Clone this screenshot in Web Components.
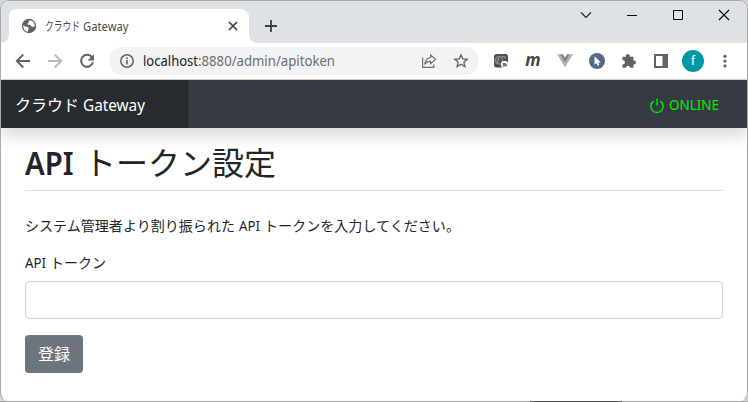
<!DOCTYPE html>
<html lang="ja">
<head>
<meta charset="utf-8">
<title>クラウド Gateway</title>
<style>
html,body{margin:0;height:100%;overflow:hidden;background:#d5d5d6}
body{font-family:"Noto Sans","Noto Sans CJK JP",sans-serif;color:#212529}
</style>
</head>
<body>
<browser-window>
  <browser-tabs slot="tabs">
    <fit-text width="35">クラウド</fit-text><fit-text width="45.5">Gateway</fit-text>
  </browser-tabs>
  <browser-toolbar slot="toolbar">
    <fit-text slot="url" width="55" style="color:#202124">localhost</fit-text><fit-text slot="url" width="137">:8880/admin/apitoken</fit-text>
  </browser-toolbar>
  <app-header>
    <fit-text slot="brand" width="64">クラウド</fit-text><fit-text slot="brand" width="62">Gateway</fit-text>
    <fit-text slot="status" width="50">ONLINE</fit-text>
  </app-header>
  <token-page></token-page>
</browser-window>
<script>
function define(name, html, init) {
  const t = document.createElement('template');
  t.innerHTML = html;
  customElements.define(name, class extends HTMLElement {
    constructor() {
      super();
      this.attachShadow({mode: 'open'}).append(t.content.cloneNode(true));
    }
    connectedCallback() { if (init) init(this); }
  });
}

const icons = {
  globe: '<circle cx="8" cy="8" r="7.2" fill="#5f6368"/><path d="M2.2 7.6C3.8 9 6.2 8.2 7.4 9.6c1 1.3-.8 2-.4 4.2C4 13.4 2 10.8 2.2 7.6zM8.4 2.2C7.2 3.4 8.2 4.4 7 5.2c-1 .7-.6 1.7.4 1.6 1.4-.2 2.2.2 2.6 1.2.5 1.1 1.8.6 3.8.4C13.9 5 11.6 2.3 8.4 2.2z" fill="#fff"/>',
  close: '<path d="M4 4l8 8M12 4l-8 8" stroke="#3c4043" stroke-width="1.7"/>',
  plus: '<path d="M8 2v12M2 8h12" stroke="#3c4043" stroke-width="1.8"/>',
  down: '<path d="M3 5.5L8 10.5l5-5" stroke="#222" fill="none" stroke-width="1.1"/>',
  min: '<path d="M3 8.5h10" stroke="#000"/>',
  max: '<path d="M3.5 3.5h9v9h-9z" stroke="#000" fill="none"/>',
  x: '<path d="M3 3l10 10M13 3L3 13" stroke="#000" stroke-width="1.1"/>',
  back: '<path d="M15 8H2M8.3 1.5L1.8 8l6.5 6.5" stroke="#5f6368" fill="none" stroke-width="1.9"/>',
  forward: '<path d="M1 8h13M7.7 1.5L14.2 8l-6.5 6.5" stroke="#bababa" fill="none" stroke-width="1.9"/>',
  reload: '<path d="M13 4.3A6 6 0 1 0 13.9 9.3" stroke="#5f6368" fill="none" stroke-width="2"/><path d="M15 1v6.4H8.6z" fill="#5f6368"/>',
  info: '<circle cx="8" cy="8" r="6.2" stroke="#5f6368" fill="none" stroke-width="1.5"/><path d="M8 7.1v4.3M8 4.4v1.6" stroke="#5f6368" stroke-width="1.6"/>',
  share: '<path d="M1.6 4.5v9.9h11.2v-3M9.6 2l5 4.3-5 4.3V8.4C6.7 8.3 4.8 9.3 3.6 11.4 4 7.8 6 5 9.6 4.5z" stroke="#6b6f73" fill="none" stroke-width="1.2"/>',
  star: '<path d="M8 1.8l1.75 4.1 4.5.4-3.4 2.9 1.05 4.4L8 11.3l-3.9 2.3 1.05-4.4-3.4-2.9 4.5-.4z" stroke="#5f6368" fill="none" stroke-width="1.3"/>',
  camera: '<rect x="1" y="1" width="14" height="13.5" rx="2.5" fill="#4d4d4d"/><circle cx="6" cy="7.3" r="3.7" fill="#555" stroke="#888" stroke-width="1.4"/><path d="M4 10c1-1 .6-3.5 2-5M9 3.8c2-1 3.4 0 3.4 2" stroke="#999" fill="none" stroke-width="1.3"/><rect x="8" y="8" width="7" height="7" rx="3" fill="#fff"/><path d="M9.7 10h3v1l1.3-.5v2.7l-1.3-.5v.8h-3z" fill="#777"/>',
  vue: '<path d="M0 1.2h3.5L8 9l4.5-7.8H16l-8 13z" fill="#b3b3b3"/><path d="M3.2 1.2H6L8 4.7l2-3.5h2.8L8 9.4z" fill="#808080"/>',
  pointer: '<circle cx="8" cy="8" r="8" fill="#526988"/><path d="M5.5 3.2v8.7l2-1.8 1.2 2.8 1.7-.8-1.2-2.6h2.7z" fill="#fff"/>',
  puzzle: '<path d="M1.5 3.8h3.4a2 2 0 1 1 3.9 0h3.7v3.7a2 2 0 1 1 0 3.9v3.4H9A2 2 0 1 0 5 14.8H1.5v-3.6a2 2 0 1 0 0-3.9z" fill="#5f6368"/>',
  panel: '<path d="M1 1h14v14H1zM3 3v10h6.5V3z" fill="#5f6368" fill-rule="evenodd"/>',
  dots: '<circle cx="8" cy="3.3" r="1.6" fill="#5f6368"/><circle cx="8" cy="8.1" r="1.6" fill="#5f6368"/><circle cx="8" cy="12.9" r="1.6" fill="#5f6368"/>',
  power: '<path d="M4.7 3.1a6.2 6.2 0 1 0 6.6 0M8 .4v7.2" stroke="#04ee04" fill="none" stroke-width="1.4"/>'
};
define('ui-icon', '<style>:host{display:block;width:16px;height:16px;flex:none}svg{display:block;overflow:visible}</style><svg width="16" height="16" viewBox="0 0 16 16"></svg>',
  el => { el.shadowRoot.querySelector('svg').innerHTML = icons[el.getAttribute('name')]; });

define('browser-window', `<style>
:host{display:block;height:402px;box-sizing:border-box;background:linear-gradient(90deg,#aaa 530px,#555 530px,#555 622px,#aaa 622px) bottom/100% 1px no-repeat}
.frame{box-sizing:border-box;height:402px;display:flex;flex-direction:column;border:1px solid #a9aaab;border-bottom-color:transparent;border-radius:9px;overflow:hidden;background:#fff;background-clip:padding-box}
</style><div class="frame"><slot name="tabs"></slot><slot name="toolbar"></slot><slot></slot></div>`);

define('browser-tabs', `<style>
:host{display:flex;height:42px;background:#dee1e6;justify-content:space-between}
.left{display:flex;padding:8px 0 0 8px}
.tab{position:relative;display:flex;box-sizing:border-box;width:240px;height:34px;background:#fff;border-radius:8px 8px 0 0;padding:0 8px 0 12px;align-items:center;font-size:12px;line-height:16px;color:#45494d}
.tab:before,.tab:after{content:"";position:absolute;bottom:0;width:8px;height:8px}
.tab:before{left:-8px;background:radial-gradient(circle at 0 0,transparent 7.5px,#fff 8px)}
.tab:after{right:-8px;background:radial-gradient(circle at 100% 0,transparent 7.5px,#fff 8px)}
.title{display:flex;gap:3px;margin-left:8px;flex:1;padding-top:1px}
.new{margin:9px 0 0 14px}
.controls{display:flex;gap:30px;padding:6px 15px 0 0}
</style>
<div class="left"><div class="tab"><ui-icon name="globe"></ui-icon><div class="title"><slot></slot></div><ui-icon name="close"></ui-icon></div><ui-icon class="new" name="plus"></ui-icon></div>
<div class="controls"><ui-icon name="down"></ui-icon><ui-icon name="min"></ui-icon><ui-icon name="max"></ui-icon><ui-icon name="x"></ui-icon></div>`);

define('browser-toolbar', `<style>
:host{display:flex;box-sizing:border-box;height:37px;align-items:center;padding:0 14px;background:#fff;border-bottom:1px solid #d2d2d2}
.nav{display:flex;gap:16px}
.url{display:flex;box-sizing:border-box;width:370px;height:28px;border-radius:14px;background:#f1f3f4;align-items:center;margin:0 14px;padding:0 10px;font-size:14px;line-height:20px;color:#6a6e72}
.text{display:flex;flex:1;margin-left:8px}
.actions,.ext{display:flex;gap:16px}
.ext{flex:1;align-items:center}
.m{width:16px;font:italic bold 17px/16px "Open Sans",sans-serif;color:#444;text-align:center;display:flex;justify-content:center;margin-top:-2px}
.avatar{width:22px;height:22px;margin:0 -3px;border-radius:50%;background:#0097a7;color:#fff;font:13px/22px Roboto,sans-serif;text-align:center}
</style>
<div class="nav"><ui-icon name="back"></ui-icon><ui-icon name="forward"></ui-icon><ui-icon name="reload"></ui-icon></div>
<div class="url"><ui-icon name="info"></ui-icon><div class="text"><slot name="url"></slot></div><div class="actions"><ui-icon name="share"></ui-icon><ui-icon name="star"></ui-icon></div></div>
<div class="ext"><ui-icon name="camera"></ui-icon><div class="m">m</div><ui-icon name="vue"></ui-icon><ui-icon name="pointer"></ui-icon><ui-icon name="puzzle"></ui-icon><ui-icon name="panel"></ui-icon><div class="avatar">f</div><ui-icon name="dots"></ui-icon></div>`);

define('app-header', `<style>
:host{display:flex;height:48px;flex:none;background:#363a43;box-shadow:0 8px 16px rgba(0,0,0,.15);justify-content:space-between;align-items:stretch}
.brand{display:flex;box-sizing:border-box;width:187px;gap:4px;padding:1px 0 0 14px;align-items:center;background:#272b30;border-right:1px solid #202428;font-size:16px;line-height:24px;color:#fff}
.status{display:flex;gap:4px;padding:2px 28px 0 0;align-items:center;font-size:14px;line-height:20px;color:#04ee04}
ui-icon{margin-top:1px}
</style>
<div class="brand"><slot name="brand"></slot></div>
<div class="status"><ui-icon name="power"></ui-icon><slot name="status"></slot></div>`);

define('text-field', `<style>
:host{display:block}
label{display:flex;gap:4px;font-size:14px;line-height:21px;margin-bottom:8px}
input{display:block;box-sizing:border-box;width:100%;height:38px;border:1px solid #ced4da;border-radius:4px;background:#fff;padding:6px 12px;font:16px "Noto Sans",sans-serif}
</style><label><slot></slot></label><input type="text">`);

define('submit-button', `<style>
:host{display:block}
button{display:block;width:58px;height:38px;padding:0 0 2px;border:0;border-radius:4px;background:#6c757d;color:#fff;font:16px/24px "Noto Sans CJK JP",sans-serif}
</style><button><slot></slot></button>`);

define('token-page', `<style>
:host{display:block;padding:16px 24px 0}
h1{display:flex;gap:10px;box-sizing:border-box;height:47px;margin:0 0 24px;border-bottom:1px solid #dee2e6;font-size:32px;line-height:38px;font-weight:400}
h1 .latin{font-weight:600}
p{display:flex;gap:4px;margin:0 0 16px;font-size:14px;line-height:21px}
submit-button{margin-top:16px}
</style>
<h1><fit-text class="latin" width="48.5">API</fit-text><fit-text width="192">トークン設定</fit-text></h1>
<p><fit-text width="210">システム管理者より割り振られた</fit-text><fit-text width="21">API</fit-text><fit-text width="196">トークンを入力してください。</fit-text></p>
<text-field><fit-text width="21">API</fit-text><fit-text width="56">トークン</fit-text></text-field>
<submit-button>登録</submit-button>`);

// Condenses or widens one run of text to the advance given in "width".
// Registered last, so that each run is measured in its container's final font.
define('fit-text', '<style>:host{display:block;flex:none;white-space:nowrap}span{display:inline-block;transform-origin:0 50%}</style><span><slot></slot></span>',
  el => {
    const s = el.shadowRoot.querySelector('span'), w = +el.getAttribute('width');
    el.style.width = w + 'px';
    s.style.transform = 'scaleX(' + w / s.getBoundingClientRect().width + ')';
  });
</script>
</body>
</html>
